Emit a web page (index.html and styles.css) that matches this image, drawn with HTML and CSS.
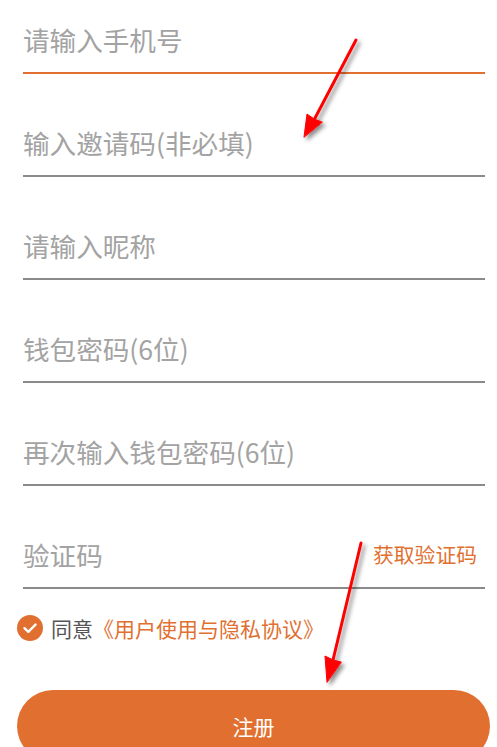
FILE: index.html
```html
<!DOCTYPE html>
<html lang="zh-CN">
<head>
    <meta charset="UTF-8">
    <meta name="viewport" content="width=device-width, initial-scale=1.0">
    <title>注册</title>
    <link rel="stylesheet" href="styles.css">
</head>
<body>
    <form class="register">
        <div class="fields">
            <div class="field active">
                <input type="tel" placeholder="请输入手机号">
            </div>
            <div class="field">
                <input type="text" placeholder="输入邀请码(非必填)">
            </div>
            <div class="field">
                <input type="text" placeholder="请输入昵称">
            </div>
            <div class="field">
                <input type="password" placeholder="钱包密码(6位)">
            </div>
            <div class="field">
                <input type="password" placeholder="再次输入钱包密码(6位)">
            </div>
            <div class="field">
                <input type="text" placeholder="验证码">
                <a class="get-code" href="#">获取验证码</a>
            </div>
        </div>
        <label class="agree">
            <span class="check">
                <svg width="26" height="26" viewBox="0 0 26 26">
                    <circle cx="13" cy="13" r="13" fill="#e17030"/>
                    <path d="M7.5 13.2 L11.3 16.8 L18.5 9.6" fill="none" stroke="#fff" stroke-width="2.4" stroke-linecap="round" stroke-linejoin="round"/>
                </svg>
            </span>
            <span class="agree-text">同意</span>
            <a class="agree-link" href="#">《用户使用与隐私协议》</a>
        </label>
        <button type="button" class="submit">注册</button>
    </form>

    <!-- annotation arrows -->
    <svg class="marks" width="497" height="747" viewBox="0 0 497 747">
        <defs>
            <filter id="shade" x="-50%" y="-50%" width="200%" height="200%">
                <feDropShadow dx="3" dy="3" stdDeviation="2" flood-color="#000" flood-opacity="0.45"/>
            </filter>
        </defs>
        <g filter="url(#shade)" fill="#ff0000" stroke="#ff0000" stroke-linecap="round" stroke-linejoin="round">
            <line x1="356" y1="40" x2="314" y2="120" stroke-width="3"/>
            <polygon points="304,137 307,114 314,119 322,122" stroke-width="1"/>
            <line x1="361" y1="543" x2="333" y2="660" stroke-width="3"/>
            <polygon points="327,682 325,656 333,660 341,662" stroke-width="1"/>
        </g>
    </svg>
</body>
</html>
```

FILE: styles.css
```css
* {
    margin: 0;
    padding: 0;
    box-sizing: border-box;
}

body {
    background-color: #ffffff;
    font-family: "Noto Sans CJK SC", "Noto Sans", sans-serif;
    width: 497px;
    height: 747px;
    overflow: hidden;
    position: relative;
}

.register {
    display: flex;
    flex-direction: column;
    padding: 0 7px 0 17px;
}

.fields {
    display: flex;
    flex-direction: column;
    gap: 29px;
    margin: 0 5px 0 6px;
}

.field {
    display: flex;
    align-items: center;
    height: 74px;
    padding-top: 6px;
    border-bottom: 2px solid #8a8a8a;
}

    .field.active {
        border-bottom-color: #e17030;
    }

    .field input {
        flex: 1;
        min-width: 0;
        border: none;
        outline: none;
        background: transparent;
        font-family: inherit;
        font-size: 26.6px;
        color: #333333;
    }

        .field input::placeholder {
            color: #a3a3a3;
        }

.get-code {
    color: #e17030;
    font-size: 20.8px;
    text-decoration: none;
    margin-right: 8px;
}

.agree {
    display: flex;
    align-items: center;
    margin-top: 24px;
    height: 30px;
    font-size: 21px;
}

    .agree .check {
        display: flex;
        margin-right: 8px;
    }

.agree-text {
    color: #555555;
}

.agree-link {
    color: #e17030;
    text-decoration: none;
}

.submit {
    margin-top: 47px;
    height: 72px;
    border: none;
    border-radius: 36px;
    background-color: #e17030;
    color: #ffffff;
    font-family: inherit;
    font-size: 21px;
    cursor: pointer;
}

.marks {
    position: absolute;
    left: 0;
    top: 0;
    pointer-events: none;
}
```
